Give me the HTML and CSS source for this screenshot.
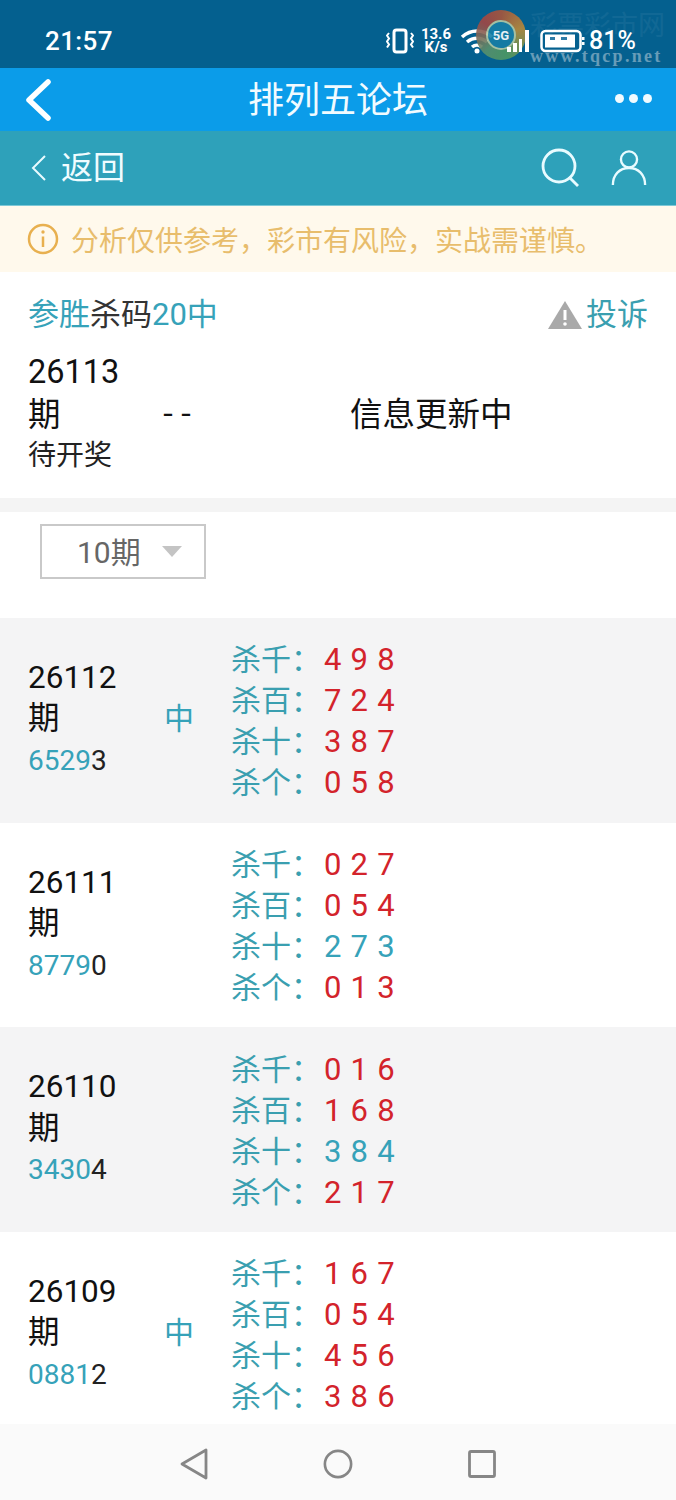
FILE: index.html
```html
<!DOCTYPE html>
<html lang="zh">
<head>
<meta charset="utf-8">
<title>排列五论坛</title>
<link rel="stylesheet" href="styles.css">
</head>
<body>
<div class="phone">
  <header class="status">
    <span class="clock">21:57</span>
    <div class="wm-logo"><span class="wm-5g">5G</span></div>
    <span class="wm-cn">彩票彩市网</span>
    <div class="status-icons">
      <svg class="ic-vib" viewBox="0 0 28 26"><rect x="8" y="2" width="12" height="22" rx="2.500" fill="none" stroke="#fff" stroke-width="3"/><path d="M3 5l-2 2.500 2 3-2 3 2 3-2 3M25 5l2 2.500-2 3 2 3-2 3 2 3" fill="none" stroke="#fff" stroke-width="2"/></svg>
      <span class="speed">13.6<br>K/s</span>
      <svg class="ic-wifi" viewBox="0 0 34 26"><path d="M2 9c9-8 21-8 30 0M7 14c6-5 14-5 20 0M12 19c3-2.500 7-2.500 10 0" fill="none" stroke="#fff" stroke-width="3.500"/><circle cx="17" cy="23" r="2.500" fill="#fff"/></svg>
      <svg class="ic-signal" viewBox="0 0 30 26"><path d="M7 19h4v5H7zM13 15h4v9h-4zM19 11h3v13h-3zM25 2h4v22h-4z" fill="#fff"/></svg>
      <svg class="ic-batt" viewBox="0 0 46 24"><rect x="1.500" y="2" width="39" height="20" rx="4" fill="none" stroke="#fff" stroke-width="2.500"/><rect x="5" y="5.500" width="30" height="13" fill="#fff"/><path d="M10 8h5v3h-5zM21 8h6v3h-6z" fill="#2f7da8"/><rect x="42" y="8" width="2.500" height="3" fill="#fff"/><rect x="42" y="13" width="2.500" height="3" fill="#fff"/></svg>
      <span class="batt-pct">81%</span>
    </div>
    <span class="wm-url">www.tqcp.net</span>
  </header>

  <nav class="topbar">
    <svg class="ic-back" viewBox="0 0 28 42"><path d="M24 3L5 21l19 18" fill="none" stroke="#fff" stroke-width="5.500" stroke-linecap="round" stroke-linejoin="round"/></svg>
    <h1 class="topbar-title">排列五论坛</h1>
    <div class="dots"><i></i><i></i><i></i></div>
  </nav>

  <div class="subbar">
    <div class="sub-back">
      <svg class="ic-sub-back" viewBox="0 0 16 28"><path d="M14 2L2 14l12 12" fill="none" stroke="#e8fbff" stroke-width="2"/></svg>
      <span>返回</span>
    </div>
    <div class="sub-actions">
      <svg class="ic-search" viewBox="0 0 40 40"><circle cx="18" cy="18" r="16" fill="none" stroke="#e8fbff" stroke-width="2.800"/><path d="M28 29l9 9" stroke="#e8fbff" stroke-width="2.800" fill="none"/></svg>
      <svg class="ic-user" viewBox="0 0 38 38"><circle cx="19" cy="10" r="8.500" fill="none" stroke="#e8fbff" stroke-width="2.500"/><path d="M2 37c0-11 7-18 17-18s17 7 17 18" fill="none" stroke="#e8fbff" stroke-width="2.500"/></svg>
    </div>
  </div>

  <div class="notice">
    <svg class="ic-info" viewBox="0 0 32 32"><circle cx="16" cy="16" r="14" fill="none" stroke="#e8b04f" stroke-width="2.500"/><path d="M16 13.500V24" stroke="#e8b04f" stroke-width="2.500"/><circle cx="16" cy="9" r="1.700" fill="#e8b04f"/></svg>
    <span>分析仅供参考，彩市有风险，实战需谨慎。</span>
  </div>

  <section class="head-card">
    <div class="head-title">
      <div><span class="teal">参胜</span><span class="dark">杀码</span><span class="teal">20中</span></div>
      <div class="report">
        <svg class="ic-warn" viewBox="0 0 34 28"><path d="M17 0l17 28H0z" fill="#a9a9a9"/><path d="M17 9v10" stroke="#fff" stroke-width="3"/><circle cx="17" cy="23" r="1.800" fill="#fff"/></svg>
        <span class="teal-soft">投诉</span>
      </div>
    </div>
    <div class="latest">
      <div class="latest-issue">
        <div class="issue">26113</div>
        <div class="issue">期</div>
        <div class="draw">待开奖</div>
      </div>
      <div class="latest-mid">--</div>
      <div class="latest-info">信息更新中</div>
    </div>
  </section>

  <section class="filter">
    <div class="select"><span>10期</span><i class="caret"></i></div>
  </section>

  <main class="list">
    <article class="row shade">
      <div class="col-issue"><div class="issue">26112</div><div class="issue">期</div><div class="draw"><span class="teal">6529</span>3</div></div>
      <div class="col-hit">中</div>
      <div class="col-kills">
        <div class="kill"><span class="kill-label">杀千：</span><span class="nums red">4 9 8</span></div>
        <div class="kill"><span class="kill-label">杀百：</span><span class="nums red">7 2 4</span></div>
        <div class="kill"><span class="kill-label">杀十：</span><span class="nums red">3 8 7</span></div>
        <div class="kill"><span class="kill-label">杀个：</span><span class="nums red">0 5 8</span></div>
      </div>
    </article>
    <article class="row">
      <div class="col-issue"><div class="issue">26111</div><div class="issue">期</div><div class="draw"><span class="teal">8779</span>0</div></div>
      <div class="col-hit"></div>
      <div class="col-kills">
        <div class="kill"><span class="kill-label">杀千：</span><span class="nums red">0 2 7</span></div>
        <div class="kill"><span class="kill-label">杀百：</span><span class="nums red">0 5 4</span></div>
        <div class="kill"><span class="kill-label">杀十：</span><span class="nums teal">2 7 3</span></div>
        <div class="kill"><span class="kill-label">杀个：</span><span class="nums red">0 1 3</span></div>
      </div>
    </article>
    <article class="row shade">
      <div class="col-issue"><div class="issue">26110</div><div class="issue">期</div><div class="draw"><span class="teal">3430</span>4</div></div>
      <div class="col-hit"></div>
      <div class="col-kills">
        <div class="kill"><span class="kill-label">杀千：</span><span class="nums red">0 1 6</span></div>
        <div class="kill"><span class="kill-label">杀百：</span><span class="nums red">1 6 8</span></div>
        <div class="kill"><span class="kill-label">杀十：</span><span class="nums teal">3 8 4</span></div>
        <div class="kill"><span class="kill-label">杀个：</span><span class="nums red">2 1 7</span></div>
      </div>
    </article>
    <article class="row">
      <div class="col-issue"><div class="issue">26109</div><div class="issue">期</div><div class="draw"><span class="teal">0881</span>2</div></div>
      <div class="col-hit">中</div>
      <div class="col-kills">
        <div class="kill"><span class="kill-label">杀千：</span><span class="nums red">1 6 7</span></div>
        <div class="kill"><span class="kill-label">杀百：</span><span class="nums red">0 5 4</span></div>
        <div class="kill"><span class="kill-label">杀十：</span><span class="nums red">4 5 6</span></div>
        <div class="kill"><span class="kill-label">杀个：</span><span class="nums red">3 8 6</span></div>
      </div>
    </article>
  </main>

  <footer class="sysnav">
    <svg class="ic-nav" viewBox="0 0 30 32"><path d="M27 2v28L3 16z" fill="none" stroke="#868686" stroke-width="2.800" stroke-linejoin="round"/></svg>
    <svg class="ic-nav" viewBox="0 0 32 32"><circle cx="16" cy="16" r="14" fill="none" stroke="#868686" stroke-width="2.800"/></svg>
    <svg class="ic-nav" viewBox="0 0 30 30"><rect x="2.500" y="2.500" width="25" height="25" rx="1.500" fill="none" stroke="#868686" stroke-width="2.800"/></svg>
  </footer>
</div>
</body>
</html>
```
FILE: styles.css
```css
* { box-sizing: border-box; }
html, body { margin: 0; padding: 0; background: #fff; }
body { font-family: Roboto, "Noto Sans CJK SC", sans-serif; color: #111; }
.phone { width: 676px; height: 1500px; display: flex; flex-direction: column; overflow: hidden; position: relative; }

.status { height: 68px; flex: none; background: #04608f; position: relative; display: flex; align-items: center; justify-content: space-between; padding: 13px 41px 0 45px; color: #fff; }
.clock { font-size: 26px; font-weight: 500; letter-spacing: .4px; }
.status-icons { display: flex; align-items: center; }
.ic-vib { width: 28px; height: 26px; }
.speed { font-size: 15px; line-height: 13px; font-weight: 700; text-align: center; width: 32px; margin-left: 6px; }
.ic-wifi { width: 34px; height: 26px; margin-left: 8px; }
.ic-signal { width: 30px; height: 26px; margin-left: 6px; position: relative; z-index: 3; }
.ic-batt { width: 46px; height: 24px; margin-left: 10px; }
.batt-pct { font-size: 25px; font-weight: 500; margin-left: 3px; width: 46px; }
.wm-logo { position: absolute; left: 476px; top: 10px; z-index: 2; width: 50px; height: 50px; border-radius: 50%; background: conic-gradient(#a8553c, #b88a3a 20%, #4d9a63 45%, #58906d 62%, #a24644 85%, #a8553c); display: flex; align-items: center; justify-content: center; opacity: .9; }
.wm-5g { width: 30px; height: 30px; border-radius: 50%; background: #177fa6; color: #fff; font-size: 13px; font-weight: 700; display: flex; align-items: center; justify-content: center; border: 2px solid #b5cba6; }
.wm-cn { position: absolute; left: 530px; top: 11px; font-size: 27px; line-height: 30px; color: #fff; opacity: .05; white-space: nowrap; }
.wm-url { position: absolute; left: 530px; top: 46px; z-index: 2; font-family: "Liberation Serif", serif; font-size: 18px; line-height: 20px; font-weight: 700; letter-spacing: 2.300px; color: #a9c4d4; opacity: .6; white-space: nowrap; }

.topbar { height: 63px; flex: none; background: #0b9ce9; display: flex; align-items: center; justify-content: space-between; padding: 0 24px; position: relative; }
.ic-back { width: 28px; height: 42px; }
.topbar-title { position: absolute; left: 0; right: 0; top: 2px; text-align: center; margin: 0; font-size: 36px; line-height: 63px; font-weight: 400; color: #f1fbff; }
.dots { display: flex; gap: 5px; margin-bottom: 3px; }
.dots i { width: 9px; height: 9px; border-radius: 50%; background: #f1fbff; }

.subbar { height: 75px; flex: none; background: #2ea1ba; border-bottom: 1px solid #7ec8d6; display: flex; align-items: center; justify-content: space-between; padding: 0 29px 0 31px; }
.sub-back { display: flex; align-items: center; gap: 14px; font-size: 32px; line-height: 44px; color: #f0fcff; }
.ic-sub-back { width: 16px; height: 28px; }
.sub-actions { display: flex; align-items: center; gap: 30px; }
.ic-search { width: 40px; height: 40px; }
.ic-user { width: 36px; height: 38px; }

.notice { height: 66px; flex: none; background: #fff9ec; display: flex; align-items: center; gap: 12px; padding: 0 0 0 27px; font-size: 28px; color: #e8bd6c; }
.ic-info { width: 32px; height: 32px; }

.teal { color: #36a2b9; }
.teal-soft { color: #3a9fb0; }
.dark { color: #333; }
.red { color: #d3232b; }

.head-card { height: 226px; flex: none; padding: 22px 28px 0 28px; background: #fff; }
.head-title { display: flex; justify-content: space-between; align-items: center; font-size: 31px; line-height: 42px; }
.report { display: flex; align-items: center; gap: 4px; font-size: 31px; }
.ic-warn { width: 34px; height: 28px; }
.latest { display: flex; margin-top: 15px; }
.latest-issue { width: 131px; flex: none; }
.issue { font-size: 32.500px; line-height: 42.500px; color: #111; }
.draw { font-size: 28px; line-height: 40px; color: #222; }
.latest-mid { width: 191px; flex: none; font-family: "Liberation Mono", monospace; font-size: 30px; line-height: 42px; margin-top: 43px; }
.latest-info { font-size: 32.500px; line-height: 42px; margin-top: 43px; }

.filter { height: 120px; flex: none; margin: 0; border-top: 14px solid #f4f4f4; padding: 12px 0 0 40px; background: #fff; }
.select { width: 166px; height: 55px; border: 2px solid #c9c9c9; display: flex; align-items: center; padding: 0 0 3px 35px; gap: 21px; font-size: 30px; color: #666; }
.caret { width: 0; height: 0; border-left: 10px solid transparent; border-right: 10px solid transparent; border-top: 11px solid #c4c4c4; margin-top: 3px; }

.list { flex: 1; min-height: 0; overflow: hidden; }
.row { height: 204.700px; display: flex; align-items: center; padding-left: 28px; background: #fff; }
.row.shade { background: #f4f4f5; }
.col-issue { width: 136px; flex: none; padding-bottom: 3px; }
.col-issue .issue { font-size: 31.500px; line-height: 41.500px; }
.col-issue .draw { font-size: 28px; line-height: 41px; }
.col-hit { width: 67px; flex: none; font-size: 30px; line-height: 42px; padding-bottom: 2px; color: #36a2b9; }
.col-kills { padding-top: 2px; }
.kill { font-size: 30px; line-height: 41px; display: flex; white-space: nowrap; }
.kill-label { color: #3a9fb0; width: 93px; }
.nums { font-size: 31px; word-spacing: 1.500px; }

.sysnav { height: 76px; flex: none; background: #fafafa; display: flex; align-items: center; justify-content: center; gap: 114px; padding-top: 3px; }
.ic-nav { width: 30px; height: 32px; }
```
